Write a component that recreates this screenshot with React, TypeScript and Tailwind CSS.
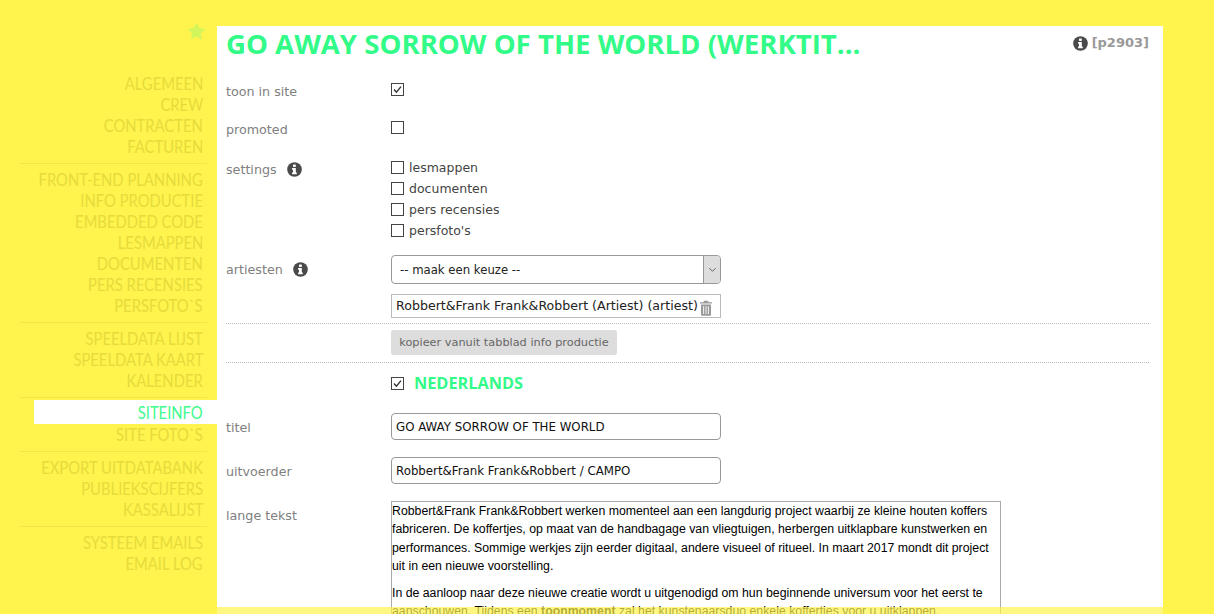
import React from 'react';

const navGroups = [
  ['ALGEMEEN', 'CREW', 'CONTRACTEN', 'FACTUREN'],
  ['FRONT-END PLANNING', 'INFO PRODUCTIE', 'EMBEDDED CODE', 'LESMAPPEN', 'DOCUMENTEN', 'PERS RECENSIES', 'PERSFOTO`S'],
  ['SPEELDATA LIJST', 'SPEELDATA KAART', 'KALENDER'],
  ['SITEINFO', 'SITE FOTO`S'],
  ['EXPORT UITDATABANK', 'PUBLIEKSCIJFERS', 'KASSALIJST'],
  ['SYSTEEM EMAILS', 'EMAIL LOG'],
];

function InfoIcon({ className = '' }: { className?: string }) {
  return (
    <svg viewBox="0 0 16 16" className={`w-[15px] h-[15px] ${className}`}>
      <circle cx="8" cy="8" r="7.8" fill="#4a4a4a" />
      <rect x="6.4" y="2.6" width="3" height="2.6" rx="0.6" fill="#fff" />
      <path d="M5.4 6.4h4v4.8h1v1.9H5.4v-1.9h1V8.3h-1z" fill="#fff" />
    </svg>
  );
}

function Check({ checked = false }: { checked?: boolean }) {
  return (
    <span className="block w-[13px] h-[13px] border border-[#444] bg-white shrink-0">
      {checked && (
        <svg viewBox="0 0 11 11" className="w-[11px] h-[11px]">
          <path d="M2 5.5l2.4 2.6L9 2.6" fill="none" stroke="#333" strokeWidth="1.4" />
        </svg>
      )}
    </span>
  );
}

function Trash() {
  return (
    <svg viewBox="0 0 14 16" className="w-[14px] h-[16px] shrink-0 mt-[3px] ml-px">
      <path d="M5 0.8h4l.6 1.4H13v1.4H1V2.2h3.4z" fill="#999" />
      <path d="M2 4.6h10v9.8c0 .7-.5 1.3-1.2 1.3H3.2c-.7 0-1.2-.6-1.2-1.3z" fill="#999" />
      <path d="M4.6 6.2v7.8M7 6.2v7.8M9.4 6.2v7.8" stroke="#fff" strokeWidth="0.9" />
    </svg>
  );
}

const label = "w-[165px] shrink-0 text-[12.7px] text-[#808080]";

export default function App() {
  return (
    <div className="h-[614px] w-[1214px] overflow-hidden relative bg-[#fff34d] flex font-['DejaVu_Sans',sans-serif]">
      {/* left menu */}
      <div className="w-[217px] shrink-0 pt-[20px]">
        <div className="flex justify-end pr-[11px] h-[54px]">
          <svg viewBox="0 0 20 20" className="w-[19px] h-[19px] mt-[2px]">
            <path d="M10 0.5l2.9 6 6.6.8-4.9 4.5 1.3 6.6L10 15.2l-5.9 3.2 1.3-6.6L.5 7.3l6.6-.8z" fill="#d2f55c" />
          </svg>
        </div>
        {navGroups.map((group, i) => (
          <div key={i}>
            {i > 0 && <div className="ml-[20px] w-[187px] h-px bg-[#f0e648] mt-[5px] mb-[6px]" />}
            {group.map((item) => (
              <div
                key={item}
                className={
                  item === 'SITEINFO'
                    ? "h-[24px] -mt-[4px] mb-px ml-[34px] pt-[3px] bg-white text-[#3dfb8c] text-right pr-[14px] text-[17px] leading-[20px] font-['Lato',sans-serif]"
                    : "h-[21px] text-[#e6db3c] text-right pr-[14px] text-[17px] leading-[20px] font-['Lato',sans-serif] whitespace-nowrap"
                }
              >
                <span className="inline-block origin-right scale-x-[0.87]">{item}</span>
              </div>
            ))}
          </div>
        ))}
      </div>

      {/* main panel */}
      <div className="w-[946px] mt-[26px] bg-white pl-[9px] pr-[14px]">
        <div className="flex justify-between h-[40px]">
          <div className="text-[#33fb88] text-[27.6px] leading-[34px] font-bold font-['Open_Sans',sans-serif] whitespace-nowrap">
            GO AWAY SORROW OF THE WORLD (WERKTIT...
          </div>
          <div className="flex items-center gap-[4px] h-[34px]">
            <InfoIcon />
            <span className="text-[13px] font-bold text-[#999]">[p2903]</span>
          </div>
        </div>

        <div className="flex items-start h-[24px] mt-[12px]">
          <div className={`${label} pt-[4px]`}>toon in site</div>
          <div className="pt-[5px]"><Check checked /></div>
        </div>
        <div className="flex items-start h-[24px] mt-[14px]">
          <div className={`${label} pt-[4px]`}>promoted</div>
          <div className="pt-[5px]"><Check /></div>
        </div>

        <div className="flex mt-[17px]">
          <div className={`${label} flex items-center gap-[10px] h-[21px] pt-[4px]`}>
            settings <InfoIcon />
          </div>
          <div className="flex flex-col text-[12.5px] text-[#444]">
            {['lesmappen', 'documenten', 'pers recensies', "persfoto's"].map((s) => (
              <div key={s} className="flex items-center gap-[5px] h-[21px]">
                <Check />
                <span className="pt-px">{s}</span>
              </div>
            ))}
          </div>
        </div>

        <div className="flex mt-[14px]">
          <div className={`${label} flex items-center gap-[10px] h-[29px]`}>
            artiesten <InfoIcon />
          </div>
          <div className="w-[330px] h-[29px] border border-[#999] rounded-[4px] flex items-stretch overflow-hidden">
            <div className="flex-1 pl-[8px] text-[11.7px] leading-[29px] text-[#222]">-- maak een keuze --</div>
            <div className="w-[17px] bg-[#ddd] border-l border-[#999] flex items-center justify-center">
              <svg viewBox="0 0 10 10" className="w-[9px] h-[9px]">
                <path d="M1.5 3.5L5 7l3.5-3.5" fill="none" stroke="#555" strokeWidth="1" />
              </svg>
            </div>
          </div>
        </div>
        <div className="flex mt-[10px]">
          <div className="w-[165px] shrink-0" />
          <div className="w-[330px] h-[24px] border border-[#bbb] flex items-center pl-[4px] text-[12.6px] text-[#222] whitespace-nowrap">
            <span className="pt-px">Robbert&amp;Frank Frank&amp;Robbert (Artiest) (artiest)</span>
            <Trash />
          </div>
        </div>

        <div className="border-t border-dotted border-[#bbb] mt-[5px] pt-[6px] pb-[7px] pl-[165px]">
          <div className="w-[226px] h-[25px] rounded-[3px] bg-[#ddd] text-[#666] text-[11.3px] leading-[26px] text-center">
            kopieer vanuit tabblad info productie
          </div>
        </div>
        <div className="border-t border-dotted border-[#bbb] pl-[165px] flex items-center gap-[10px] h-[41px]">
          <Check checked />
          <span className="text-[#33fb88] text-[16.3px] font-bold font-['Open_Sans',sans-serif]">NEDERLANDS</span>
        </div>

        <div className="flex items-center mt-[10px]">
          <div className={`${label} pt-[2px]`}>titel</div>
          <div className="w-[330px] h-[27px] border border-[#999] rounded-[4px] pl-[4px] text-[11.8px] leading-[27px] text-[#111]">
            GO AWAY SORROW OF THE WORLD
          </div>
        </div>
        <div className="flex items-center mt-[17px]">
          <div className={`${label} pt-[2px]`}>uitvoerder</div>
          <div className="w-[330px] h-[27px] border border-[#999] rounded-[4px] pl-[4px] text-[11.8px] leading-[27px] text-[#111]">
            Robbert&amp;Frank Frank&amp;Robbert / CAMPO
          </div>
        </div>

        <div className="flex mt-[17px]">
          <div className={`${label} pt-[5px]`}>lange tekst</div>
          <div className="w-[610px] h-[200px] border border-[#aaa] pr-[5px] text-[12.3px] leading-[18.3px] text-black font-['Liberation_Sans',sans-serif]">
            <p className="mb-[9px]">
              Robbert&amp;Frank Frank&amp;Robbert werken momenteel aan een langdurig project waarbij ze kleine houten koffers fabriceren. De koffertjes, op maat van de handbagage van vliegtuigen, herbergen uitklapbare kunstwerken en performances. Sommige werkjes zijn eerder digitaal, andere visueel of ritueel. In maart 2017 mondt dit project uit in een nieuwe voorstelling.
            </p>
            <p>
              In de aanloop naar deze nieuwe creatie wordt u uitgenodigd om hun beginnende universum voor het eerst te aanschouwen. Tijdens een <b>toonmoment</b> zal het kunstenaarsduo enkele koffertjes voor u uitklappen.
            </p>
          </div>
        </div>
      </div>

      {/* yellow bottom strip over the page */}
      <div className="absolute left-0 right-0 top-[607px] bottom-0 bg-[#fff34d]/70" />
    </div>
  );
}
